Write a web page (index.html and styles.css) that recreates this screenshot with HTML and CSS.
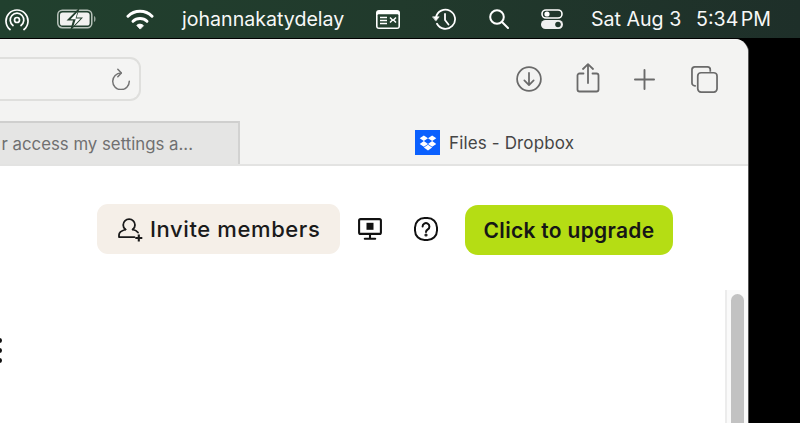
FILE: index.html
```html
<!DOCTYPE html>
<html lang="en">
<head>
<meta charset="utf-8">
<title>Files - Dropbox</title>
<link rel="stylesheet" href="styles.css">
</head>
<body>
<header class="menubar">
  <svg class="mi airdrop" viewBox="0 0 24 23" fill="none" stroke="#fff" stroke-width="1.7" stroke-linecap="round"><path d="M5 21.500A11 11 0 1 1 19 21.500"/><path d="M8 17.500A6.800 6.800 0 1 1 16 17.500"/><circle cx="12" cy="12" r="2.500"/></svg>
  <svg class="mi battery" viewBox="0 0 40 24" fill="none"><rect x=".8" y="3.300" width="34" height="17.400" rx="4.500" stroke="#b9c4bc" stroke-width="1.500"/><rect x="3" y="5.500" width="29.600" height="13" rx="2.600" fill="#f2f2f0"/><path d="M37 9c2 .6 2 5.400 0 6z" fill="#9aa69e"/><path d="M23 0 9.500 13.500h6.500L13 24l13-13.500h-6.500z" fill="#24402f"/><path d="M20.500 5 13.500 12.200h5.200l-2.200 6.800 7.200-7.500h-5.200z" fill="#fff"/></svg>
  <svg class="mi wifi" viewBox="0 0 28 21" fill="none" stroke="#fff" stroke-width="3" stroke-linecap="round"><path d="M2 7.200a17 17 0 0 1 24 0"/><path d="M7 12.300a10 10 0 0 1 14 0"/><path d="M14 19.800 10.800 16.400a4.600 4.600 0 0 1 6.400 0z" fill="#fff" stroke-width="1"/></svg>
  <span class="mtext user">johannakatydelay</span>
  <svg class="mi cal" viewBox="0 0 26 21" fill="none"><rect x="1" y="1" width="24" height="19" rx="3" fill="#fff"/><rect x="2.600" y="5.200" width="20.800" height="13.200" rx="1" fill="#24402f"/><path d="M5 8.500h7M5 11.500h7M5 14.500h7" stroke="#fff" stroke-width="1.300"/><path d="M15 8.500l2.500 2.500-2.500 2.500M21 8.500l-2.500 2.500 2.500 2.500" stroke="#fff" stroke-width="1.500"/></svg>
  <svg class="mi hist" viewBox="0 0 24 23" fill="none" stroke="#fff" stroke-width="1.800" stroke-linecap="round"><path d="M4 9.500A9.600 9.600 0 1 1 5 15.800"/><path d="M.8 8.800h6.400l-3.200 4z" fill="#fff" stroke-width=".6"/><path d="M13 6v6l3.500 4.500"/></svg>
  <svg class="mi search" viewBox="0 0 20 20" fill="none" stroke="#fff" stroke-width="2" stroke-linecap="round"><circle cx="8" cy="8" r="6.800"/><path d="M13 13l6 6"/></svg>
  <svg class="mi ctrl" viewBox="0 0 22 20" fill="none"><rect x="1" y="1" width="20" height="8" rx="4" stroke="#fff" stroke-width="1.600"/><circle cx="6" cy="5" r="2.600" fill="#fff"/><rect y="11" width="22" height="9" rx="4.500" fill="#f0f0f0"/><circle cx="17" cy="15.500" r="2.800" fill="#22382d"/></svg>
  <span class="mtext date">Sat Aug 3</span>
  <span class="mtext time">5:34 PM</span>
</header>
<div class="desktop">
  <main class="window">
    <div class="toolbar">
      <div class="urlbar">
        <svg class="reload" viewBox="0 0 22 22" fill="none" stroke="#747474" stroke-width="1.500" stroke-linecap="round" stroke-linejoin="round"><path d="M11 5A8.300 8.300 0 1 0 19.300 13.300"/><path d="M7.800 1.200l3.600 3.800-3.600 3.800"/></svg>
      </div>
      <div class="tools">
        <svg class="ti dl" viewBox="0 0 28 28" fill="none" stroke="#6a6a6a" stroke-width="1.900" stroke-linecap="round" stroke-linejoin="round"><circle cx="14" cy="14" r="12.800"/><path d="M14 7.500v12.500M9 15.500l5 5 5-5"/></svg>
        <svg class="ti share" viewBox="0 0 24 30" fill="none" stroke="#6a6a6a" stroke-width="1.800" stroke-linecap="round" stroke-linejoin="round"><path d="M7.500 10.500H3.500a2 2 0 0 0-2 2v14a2 2 0 0 0 2 2h17a2 2 0 0 0 2-2v-14a2 2 0 0 0-2-2h-4"/><path d="M12 20V1.500M7 6l5-4.800L17 6"/></svg>
        <svg class="ti plus" viewBox="0 0 22 22" fill="none" stroke="#6a6a6a" stroke-width="2" stroke-linecap="round"><path d="M11 1v20M1 11h20"/></svg>
        <svg class="ti tabs" viewBox="0 0 28 28" fill="none" stroke="#6a6a6a" stroke-width="1.800"><path d="M5 20.500H4a3 3 0 0 1-3-3V4a3 3 0 0 1 3-3h13a3 3 0 0 1 3 3v2"/><rect x="7" y="7" width="20" height="20" rx="3.400"/></svg>
      </div>
    </div>
    <nav class="tabbar">
      <div class="tab inactive"><span class="tab-title">r access my settings a...</span></div>
      <div class="tab active">
        <span class="favicon"><svg viewBox="0 0 26 24" fill="#fff"><path d="M7 2 1 6l6 4 6-4zM19 2l-6 4 6 4 6-4zM1 14l6 4 6-4-6-4zM19 10l-6 4 6 4 6-4zM7 19.400l6 4 6-4-6-4z"/></svg></span>
        <span class="tab-label">Files - Dropbox</span>
      </div>
    </nav>
    <section class="content">
      <div class="actions">
        <button class="invite">
          <svg class="uicon" viewBox="0 0 26 26" fill="none" stroke="#1a1a1a" stroke-width="1.800" stroke-linecap="round" stroke-linejoin="round"><path d="M8.500 13.500c-1.500-1-2.300-2.600-2.300-4.500a5.900 5.900 0 0 1 11.800 0c0 1.900-.8 3.500-2.300 4.500"/><path d="M8.500 13.500c-3.500 1-6.500 2.500-6.500 5.500v2.100h15.500M15.700 13.500c2.300.6 4.200 1.600 5.300 3"/><path d="M21.800 18.500v7M18.300 22h7" stroke-width="2.100" stroke-linecap="butt"/></svg>
          <span>Invite members</span>
        </button>
        <svg class="aicon screen" viewBox="0 0 24 22" fill="none" stroke="#111" stroke-width="2.100" stroke-linecap="round"><rect x="1.100" y="1.100" width="21.800" height="14.800" rx="1.500"/><rect x="8.500" y="4.800" width="7" height="7" fill="#111" stroke="none"/><path d="M12 16v4.800M6.800 20.800h10.400"/></svg>
        <svg class="aicon help" viewBox="0 0 24 24" fill="none" stroke="#111" stroke-width="2" stroke-linecap="round"><rect x="1" y="1" width="22" height="22" rx="9.500"/><path d="M8.600 9.500a3.400 3.400 0 1 1 5.200 2.900c-1.200.8-1.800 1.300-1.800 2.600"/><circle cx="12" cy="18" r=".6" fill="#111"/></svg>
        <button class="upgrade">Click to upgrade</button>
      </div>
      <div class="lower">
        <div class="dots"><i></i><i></i><i></i></div>
        <div class="scrolltrack"><div class="thumb"></div></div>
      </div>
    </section>
  </main>
</div>
</body>
</html>
```
FILE: styles.css
```css
* { box-sizing: border-box; }
html, body { margin: 0; height: 100%; }
body { width: 800px; height: 423px; overflow: hidden; background: #000; font-family: "Inter", "Liberation Sans", sans-serif; display: flex; flex-direction: column; }

.menubar { height: 38px; flex: none; display: flex; align-items: center; background: linear-gradient(90deg, #21402e 0%, #213a2c 50%, #1e2f29 100%); color: #fff; }
.mi { display: block; flex: none; }
.airdrop { width: 24px; height: 23px; margin-left: 5px; }
.battery { width: 40px; height: 24px; margin-left: 28px; }
.wifi { width: 28px; height: 21px; margin-left: 29px; }
.mtext { font-family: "Inter", "Liberation Sans", sans-serif; font-size: 19.600px; white-space: nowrap; flex: none; color: #f7f8f7; }
.user { margin-left: 28px; width: 165px; }
.cal { width: 26px; height: 21px; margin-left: 28px; }
.hist { width: 24px; height: 23px; margin-left: 31px; }
.search { width: 20px; height: 20px; margin-left: 33px; }
.ctrl { width: 22px; height: 20px; margin-left: 32px; }
.date { margin-left: 28px; width: 92px; }
.time { margin-left: 13px; word-spacing: -3px; }

.desktop { flex: 1; display: flex; min-height: 0; padding-top: 1px; }
.window { width: 749px; height: 100%; background: #fff; border-radius: 0 14px 0 0; overflow: hidden; display: flex; flex-direction: column; border-right: 1px solid #555; }

.toolbar { height: 82px; flex: none; background: #f3f3f2; display: flex; align-items: center; justify-content: space-between; padding-bottom: 2px; }
.urlbar { width: 141px; height: 44px; background: #f4f4f3; border: 2px solid #dfdfdd; border-left: 0; border-radius: 0 11px 11px 0; display: flex; align-items: center; justify-content: flex-end; padding-right: 7px; }
.reload { width: 22px; height: 22px; margin-top: -1px; }
.tools { display: flex; align-items: center; padding-right: 30px; }
.ti { display: block; }
.dl { width: 26px; height: 26px; }
.share { width: 24px; height: 30px; margin-left: 34px; margin-top: -3px; }
.plus { width: 21px; height: 21px; margin-left: 34px; }
.tabs { width: 27px; height: 27px; margin-left: 36px; }

.tabbar { height: 45px; flex: none; display: flex; background: #f3f3f2; border-bottom: 2px solid #e3e3e2; }
.tab { height: 43px; display: flex; align-items: center; font-size: 17px; padding-top: 1px; }
.inactive { width: 240px; background: #e5e5e4; border-top: 2px solid #cfcfce; border-right: 2px solid #d2d2d1; justify-content: flex-end; padding-right: 45px; color: #707070; }
.active { flex: 1; padding-left: 175px; color: #454545; gap: 9px; padding-top: 0; }
.tab-title { white-space: nowrap; font-size: 16.800px; }
.tab-label { white-space: nowrap; letter-spacing: .14px; padding-top: 1px; }
.favicon { width: 25px; height: 25px; background: #0a60fe; display: flex; align-items: center; justify-content: center; }
.favicon svg { width: 18px; height: 17px; display: block; }

.content { flex: 1; min-height: 0; display: flex; flex-direction: column; }
.actions { display: flex; align-items: center; padding: 37px 0 0 97px; }
.invite { width: 243px; height: 50px; border: 0; border-radius: 11px; background: #f5efe8; display: flex; align-items: center; padding: 0 0 1px 20px; gap: 7px; font-family: "Inter", "Liberation Sans", sans-serif; font-size: 22px; font-weight: 500; letter-spacing: .6px; color: #1a1a1a; }
.uicon { width: 26px; height: 26px; flex: none; }
.aicon { display: block; flex: none; }
.screen { width: 24px; height: 22px; margin-left: 18px; }
.help { width: 24px; height: 24px; margin-left: 32px; margin-top: -1px; }
.upgrade { width: 208px; height: 50px; margin: 2px 0 0 27px; border: 0; border-radius: 13px; background: #b5dd14; font-family: "Inter", "Liberation Sans", sans-serif; font-size: 21px; font-weight: 600; letter-spacing: .3px; color: #161616; padding: 0; }

.lower { flex: 1; min-height: 0; display: flex; justify-content: space-between; padding-top: 35px; overflow: hidden; }
.dots { display: flex; flex-direction: column; gap: 5px; padding-top: 48px; margin-left: -3px; }
.dots i { display: block; width: 5px; height: 5px; border-radius: 50%; background: #111; }
.scrolltrack { width: 23px; background: #fafafa; border-left: 2px solid #ececec; padding: 4px 4px 0 4px; }
.thumb { height: 200px; background: #c2c2c2; border-radius: 7px 7px 0 0; }
```
